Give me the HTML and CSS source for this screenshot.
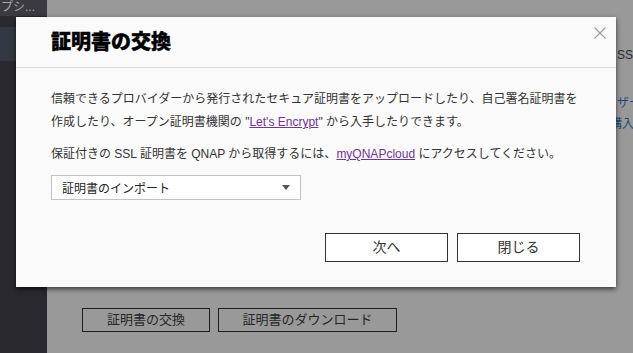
FILE: index.html
```html
<!DOCTYPE html>
<html lang="ja">
<head>
<meta charset="utf-8">
<link rel="stylesheet" href="styles.css">
</head>
<body>
<div class="page">
  <aside class="sidebar">
    <div class="side-top">プシ...</div>
    <div class="side-gap"></div>
    <div class="side-item"></div>
  </aside>
  <main class="main">
    <div class="bg-lines">
      <div class="bg-text ss">SS</div>
      <div class="bg-text link">ザー</div>
      <div class="bg-text link shift">購入</div>
    </div>
    <div class="bg-buttons">
      <div class="bg-btn w1">証明書の交換</div>
      <div class="bg-btn w2">証明書のダウンロード</div>
    </div>
  </main>
</div>

<div class="dialog">
  <div class="dlg-head">
    <h1 class="dlg-title">証明書の交換</h1>
    <svg class="close" width="12" height="12" viewBox="0 0 12 12"><path d="M0.5 0.5L11.5 11.5M11.5 0.5L0.5 11.5" stroke="#9a9a9a" stroke-width="1.1" fill="none"/></svg>
  </div>
  <div class="dlg-body">
    <p class="para">信頼できるプロバイダーから発行されたセキュア証明書をアップロードしたり、自己署名証明書を作成したり、オープン証明書機関の "<a class="lnk">Let's Encrypt</a>" から入手したりできます。</p>
    <p class="para p2">保証付きの SSL 証明書を QNAP から取得するには、<a class="lnk">myQNAPcloud</a> にアクセスしてください。</p>
    <div class="select">
      <span>証明書のインポート</span>
      <span class="arrow"></span>
    </div>
  </div>
  <div class="dlg-foot">
    <div class="btn">次へ</div>
    <div class="btn">閉じる</div>
  </div>
</div>
</body>
</html>
```

FILE: styles.css
```css
* { box-sizing: border-box; }
html, body { margin: 0; padding: 0; }
body {
  width: 633px;
  height: 353px;
  overflow: hidden;
  font-family: "Liberation Sans", "Noto Sans CJK JP", sans-serif;
  background: #999;
  position: relative;
}
.page {
  display: flex;
  height: 353px;
}
.sidebar {
  width: 47px;
  flex: none;
  background: #29292f;
  display: flex;
  flex-direction: column;
}
.side-top {
  height: 16px;
  background: #3a3a40;
  color: #a8a8ac;
  font-size: 12px;
  line-height: 15px;
  white-space: nowrap;
  overflow: hidden;
  padding-left: 1px;
}
.side-gap { height: 11px; }
.side-item {
  height: 34px;
  background: #323842;
}
.main {
  flex: 1;
  min-width: 0;
  background: #999;
  display: flex;
  flex-direction: column;
}
.bg-lines {
  padding-left: 570px;
  padding-top: 45px;
  height: 308px;
  white-space: nowrap;
  overflow: hidden;
}
.bg-text {
  font-size: 12px;
  line-height: 21px;
}
.bg-text.ss { color: #2a2a2a; margin-bottom: 27px; }
.bg-text.link { color: #1f4a73; }
.bg-text.shift { margin-left: -7px; }
.bg-buttons {
  display: flex;
  gap: 8px;
  padding-left: 35px;
}
.bg-btn {
  height: 24px;
  border: 1px solid #1f1f1f;
  font-size: 13px;
  line-height: 22px;
  color: #262626;
  text-align: center;
}
.bg-btn.w1 { width: 128px; }
.bg-btn.w2 { width: 179px; }

.dialog {
  position: absolute;
  left: 16px;
  top: 17px;
  width: 600px;
  height: 270px;
  background: #fafafa;
  box-shadow: 0 2px 5px rgba(0,0,0,0.65);
  display: flex;
  flex-direction: column;
}
.dlg-head {
  height: 51px;
  border-bottom: 1px solid #dcdcdc;
  display: flex;
  align-items: flex-start;
  justify-content: space-between;
  padding: 0 10px 0 35px;
}
.dlg-title {
  margin: 12px 0 0;
  font-size: 20px;
  font-weight: 900;
  line-height: 26px;
  color: #000;
  -webkit-text-stroke: 0.4px #000;
}
.close { margin-top: 10px; }
.dlg-body {
  padding: 20px 35px 0;
  color: #333;
  font-size: 12px;
}
.para {
  margin: 0;
  line-height: 23px;
}
.p2 { margin-top: 9px; }
.lnk {
  color: #7232a0;
  text-decoration: underline;
}
.select {
  margin-top: 9px;
  width: 250px;
  height: 25px;
  background: #fff;
  border: 1px solid #c2c2c2;
  display: flex;
  align-items: center;
  justify-content: space-between;
  padding: 0 10px;
  color: #222;
  font-size: 12px;
}
.arrow {
  width: 0;
  height: 0;
  border-left: 4px solid transparent;
  border-right: 4px solid transparent;
  border-top: 5px solid #555;
}
.dlg-foot {
  margin-top: auto;
  display: flex;
  justify-content: flex-end;
  gap: 9px;
  padding: 0 36px 25px;
}
.btn {
  width: 123px;
  height: 29px;
  border: 1px solid #333;
  background: #fff;
  font-size: 14px;
  line-height: 27px;
  text-align: center;
  color: #333;
}
```
